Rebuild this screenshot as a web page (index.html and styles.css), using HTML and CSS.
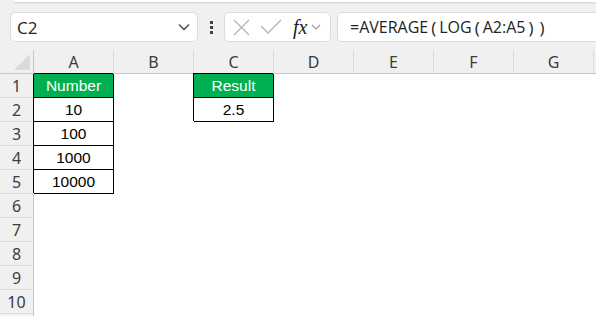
FILE: index.html
```html
<!DOCTYPE html>
<html lang="en">
<head>
  <meta charset="UTF-8" />
  <title>Sheet - LOG average</title>
  <link rel="stylesheet" href="styles.css">
</head>
<body>
  <div class="toolbar">
    <div class="ribbon-edge"></div>
    <div class="bar">
      <div class="namebox">
        <span>C2</span>
        <svg class="chev" width="12" height="8" viewBox="0 0 12 8"><path d="M1 1.5 L6 6.5 L11 1.5" fill="none" stroke="#444" stroke-width="1.3"/></svg>
      </div>
      <div class="dots"><i></i><i></i><i></i></div>
      <div class="fxbox">
        <svg width="17" height="17" viewBox="0 0 17 17"><path d="M1 1 L16 16 M16 1 L1 16" stroke="#b4b4b4" stroke-width="1.3" fill="none"/></svg>
        <svg width="22" height="16" viewBox="0 0 22 16"><path d="M1 7 L8 14 L21 1" stroke="#b4b4b4" stroke-width="1.3" fill="none"/></svg>
        <span class="fx">fx</span>
        <svg width="10" height="6" viewBox="0 0 10 6"><path d="M1 1 L5 5 L9 1" fill="none" stroke="#9a9a9a" stroke-width="1.1"/></svg>
      </div>
      <div class="formula">=AVERAGE<span class="par">(</span>LOG<span class="par">(</span>A2:A5<span class="par">)</span><span class="par">)</span></div>
    </div>
  </div>

  <div class="sheet">
    <div class="corner"><span class="tri"></span></div>
    <div class="colhead">A</div>
    <div class="colhead">B</div>
    <div class="colhead">C</div>
    <div class="colhead">D</div>
    <div class="colhead">E</div>
    <div class="colhead">F</div>
    <div class="colhead">G</div>
    <div class="colhead last"></div>

    <div class="rowhead">1</div>
    <div class="cell box head">Number</div><div class="cell"></div><div class="cell box head">Result</div><div class="cell"></div><div class="cell"></div><div class="cell"></div><div class="cell"></div><div class="cell"></div>

    <div class="rowhead">2</div>
    <div class="cell box">10</div><div class="cell"></div><div class="cell box">2.5</div><div class="cell"></div><div class="cell"></div><div class="cell"></div><div class="cell"></div><div class="cell"></div>

    <div class="rowhead">3</div>
    <div class="cell box">100</div><div class="cell"></div><div class="cell"></div><div class="cell"></div><div class="cell"></div><div class="cell"></div><div class="cell"></div><div class="cell"></div>

    <div class="rowhead">4</div>
    <div class="cell box">1000</div><div class="cell"></div><div class="cell"></div><div class="cell"></div><div class="cell"></div><div class="cell"></div><div class="cell"></div><div class="cell"></div>

    <div class="rowhead">5</div>
    <div class="cell box">10000</div><div class="cell"></div><div class="cell"></div><div class="cell"></div><div class="cell"></div><div class="cell"></div><div class="cell"></div><div class="cell"></div>

    <div class="rowhead">6</div><div class="fill"></div>
    <div class="rowhead">7</div><div class="fill"></div>
    <div class="rowhead">8</div><div class="fill"></div>
    <div class="rowhead">9</div><div class="fill"></div>
    <div class="rowhead">10</div><div class="fill"></div>
    <div class="rowhead"></div><div class="fill"></div>
  </div>
</body>
</html>
```

FILE: styles.css
```css
body {
  margin: 0;
  width: 596px;
  height: 316px;
  overflow: hidden;
  background: #ffffff;
  font-family: 'Liberation Sans', Arial, sans-serif;
}

.toolbar {
  height: 50px;
  background: #f0f0f0;
  overflow: hidden;
}

.ribbon-edge {
  height: 2px;
  margin-left: 14px;
  background: #ffffff;
  border-bottom-left-radius: 4px;
  box-shadow: 0 1px 2px rgba(0, 0, 0, 0.15);
}

.bar {
  display: flex;
  align-items: center;
  margin-top: 10px;
  height: 30px;
  padding-left: 10px;
}

.namebox,
.fxbox,
.formula {
  box-sizing: border-box;
  height: 30px;
  background: #ffffff;
  border: 1px solid #dcdcdc;
  border-radius: 5px;
  display: flex;
  align-items: center;
}

.namebox {
  width: 188px;
  padding: 0 7px 0 6px;
  justify-content: space-between;
  font-family: 'Open Sans', 'Noto Sans', sans-serif;
  font-size: 17px;
  color: #222;
}

.dots {
  width: 26px;
  display: flex;
  flex-direction: column;
  align-items: center;
  gap: 2px;
}

.dots i {
  width: 3px;
  height: 3px;
  background: #444;
}

.fxbox {
  width: 107px;
  padding-left: 8px;
  gap: 10px;
}

.fx {
  font-family: 'Liberation Serif', 'DejaVu Serif', serif;
  font-style: italic;
  font-size: 20px;
  color: #222;
  margin-left: 1px;
  margin-right: -6px;
}

.formula {
  flex: 1;
  margin-left: 6px;
  margin-right: -8px;
  padding-left: 12px;
  font-family: 'Open Sans', 'Noto Sans', sans-serif;
  font-size: 16px;
  color: #222;
}

.par {
  margin: 0 3px;
  font-size: 17px;
}

.sheet {
  display: grid;
  grid-template-columns: 34px repeat(7, 80px) 1fr;
  grid-auto-rows: 24px;
  font-family: 'Noto Sans', 'Open Sans', sans-serif;
}

.corner,
.colhead,
.rowhead {
  box-sizing: border-box;
  background: #f0f0f0;
  color: #3c3c3c;
  font-size: 16px;
  display: flex;
  align-items: center;
  justify-content: center;
}

.corner {
  border-right: 1px solid #c6c6c6;
  border-bottom: 1px solid #c6c6c6;
  position: relative;
}

.tri {
  position: absolute;
  right: 3px;
  bottom: 3px;
  width: 0;
  height: 0;
  border-left: 16px solid transparent;
  border-bottom: 16px solid #dadada;
}

.colhead {
  border-right: 1px solid #dcdcdc;
  border-bottom: 1px solid #c6c6c6;
}

.colhead.last {
  border-right: none;
}

.rowhead {
  border-right: 1px solid #c6c6c6;
  border-bottom: 1px solid #dcdcdc;
}

.cell {
  box-sizing: border-box;
  border-right: 1px solid transparent;
  border-bottom: 1px solid transparent;
  display: flex;
  align-items: center;
  justify-content: center;
  font-family: 'Liberation Sans', Arial, sans-serif;
  font-size: 15.5px;
  color: #000;
}

.cell.box {
  border-right-color: #000;
  border-bottom-color: #000;
  box-shadow: -1px -1px 0 #000;
}

.cell.head {
  background: #00b050;
  color: #ffffff;
}

.fill {
  grid-column: 2 / -1;
}
```
